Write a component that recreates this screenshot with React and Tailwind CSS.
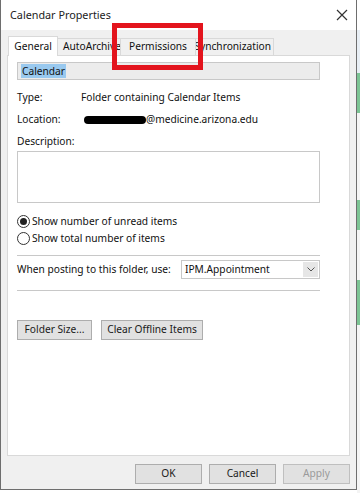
import React from 'react';

const Btn = ({ children, className = '' }) => (
  <div className={`h-[20px] flex items-center justify-center border border-[#adadad] bg-[#e1e1e1] text-[#1a1a1a] whitespace-nowrap ${className}`}>
    {children}
  </div>
);

const Radio = ({ checked, label }) => (
  <div className="flex items-center gap-[2px] h-[17px]">
    <div className="w-[13px] h-[13px] rounded-full border border-[#333] bg-white flex items-center justify-center">
      {checked && <div className="w-[7px] h-[7px] rounded-full bg-[#222]" />}
    </div>
    <span>{label}</span>
  </div>
);

const App = () => {
  return (
    <div
      className="relative w-[360px] h-[493px] bg-white overflow-hidden flex"
      style={{ fontFamily: '"Noto Sans", "Open Sans", sans-serif' }}
    >
      <div className="w-[357px] h-[490px] border-l border-r border-b border-[#6e6e6e] flex flex-col text-[10.2px] text-[#111]">
        {/* title bar */}
        <div className="h-[30px] bg-white flex items-center justify-between pl-[9px] pr-[8px]">
          <span className="text-[10.8px] text-[#222]">Calendar Properties</span>
          <svg width="12" height="12" viewBox="0 0 12 12" stroke="#333" strokeWidth="1.2">
            <path d="M1 1 L11 11 M11 1 L1 11" />
          </svg>
        </div>

        <div className="flex-1 bg-[#f0f0f0] flex flex-col px-[6px] pt-[6px]">
          {/* tabs */}
          <div className="flex items-end h-[19px] pl-[1px]">
            <div className="h-[20px] w-[50px] justify-center bg-white border border-b-0 border-[#d9d9d9] flex items-center relative z-10 -mb-[1px]">General</div>
            <div className="h-[17px] w-[63px] pl-[5px] border border-l-0 border-b-0 border-[#d9d9d9] flex items-center overflow-hidden whitespace-nowrap">AutoArchive</div>
            <div className="h-[17px] w-[75px] justify-center border border-l-0 border-b-0 border-[#d9d9d9] flex items-center">Permissions</div>
            <div className="h-[17px] w-[78px] pr-[2px] border border-l-0 border-b-0 border-[#d9d9d9] flex items-center overflow-hidden whitespace-nowrap justify-end">Synchronization</div>
          </div>

          {/* panel */}
          <div className="h-[401px] bg-white border border-[#d9d9d9] pl-[9px] pr-[29px] pt-[6px] flex flex-col">
            <div className="h-[18px] border border-[#c8c8c8] bg-[#ececec] flex items-center pl-[3px]">
              <span className="bg-[#99c9ef] leading-[14px] px-[1px]">Calendar</span>
            </div>

            <div className="flex mt-[10px] h-[16px] items-center">
              <span className="w-[64px]">Type:</span>
              <span>Folder containing Calendar Items</span>
            </div>
            <div className="flex mt-[6px] h-[16px] items-center">
              <span className="w-[67px]">Location:</span>
              <span className="w-[62px] h-[8px] bg-black rounded-full blur-[0.7px]" />
              <span>@medicine.arizona.edu</span>
            </div>
            <div className="mt-[6px] h-[16px] flex items-center">Description:</div>
            <div className="mt-[1px] h-[52px] border border-[#c8c8c8] bg-white" />

            <div className="mt-[10px] flex flex-col">
              <Radio checked label="Show number of unread items" />
              <Radio label="Show total number of items" />
            </div>

            <div className="mt-[8px] border-t border-[#c8c8c8]" />
            <div className="mt-[4px] flex items-center justify-between h-[19px]">
              <span>When posting to this folder, use:</span>
              <div className="w-[139px] h-[19px] border border-[#c8c8c8] bg-white flex items-center justify-between pl-[3px] pr-[1px]">
                <span>IPM.Appointment</span>
                <div className="w-[15px] h-[15px] bg-[#e6e6e6] flex items-center justify-center">
                  <svg width="8" height="5" viewBox="0 0 8 5" fill="none" stroke="#555" strokeWidth="1">
                    <path d="M0.5 0.5 L4 4 L7.5 0.5" />
                  </svg>
                </div>
              </div>
            </div>
            <div className="mt-[11px] border-t border-[#c8c8c8]" />

            <div className="mt-[29px] flex gap-[9px]">
              <Btn className="w-[75px]">Folder Size...</Btn>
              <Btn className="w-[102px]">Clear Offline Items</Btn>
            </div>
          </div>

          {/* footer buttons */}
          <div className="flex justify-end gap-[7px] mt-[8px]">
            <Btn className="w-[67px] border-[#0078d7] border-[1.5px]">OK</Btn>
            <Btn className="w-[67px]">Cancel</Btn>
            <Btn className="w-[67px] bg-[#cccccc] border-[#bfbfbf] text-[#9a9a9a]">Apply</Btn>
          </div>
        </div>
      </div>

      {/* backdrop strip at the right */}
      <div className="flex-1 flex flex-col">
        <div className="h-[30px] bg-white" />
        <div className="h-[43px] bg-[#e8eef4]" />
        <div className="h-[40px] bg-[#7cc494]" />
        <div className="h-[87px] bg-[#f4f4f4]" />
        <div className="h-[30px] bg-[#7cc494]" />
        <div className="h-[50px] bg-[#f4f4f4]" />
        <div className="h-[45px] bg-[#7cc494]" />
        <div className="flex-1 bg-[#f4f4f4]" />
      </div>

      {/* red highlight drawn over the Permissions tab */}
      <div className="absolute left-[112px] top-[23px] w-[91px] h-[47px] border-[5px] border-[#e3141d]" />
    </div>
  );
};

export default App;
